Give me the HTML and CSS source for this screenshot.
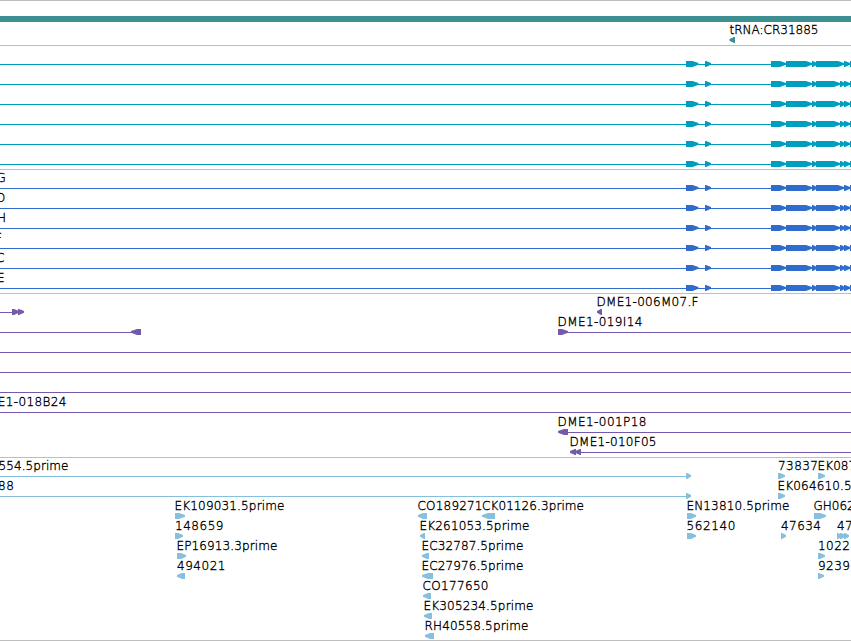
FILE: index.html
```html
<!DOCTYPE html>
<html lang="en">
<head>
<meta charset="utf-8">
<title>Genome tracks</title>
<link rel="stylesheet" href="styles.css">
</head>
<body>
<main class="browser">
  <section class="track gene"><div class="span"></div><svg id="gene" width="851" height="23"></svg></section>
  <section class="track transcript"><svg id="transcript" width="851" height="123"></svg></section>
  <section class="track cds"><svg id="cds" width="851" height="123"></svg></section>
  <section class="track bac"><svg id="bac" width="851" height="163"></svg></section>
  <section class="track est"><svg id="est" width="851" height="182"></svg></section>
</main>
<script src="tracks.js"></script>
</body>
</html>
```
FILE: styles.css
```css
body {
  margin: 0;
  background: #fff;
  overflow: hidden;
}
.browser {
  display: flex;
  flex-direction: column;
  width: 851px;
  height: 641px;
  box-sizing: border-box;
  border-bottom: 1px solid #bebebe;
}
.track {
  border-top: 1px solid #bebebe;
  color: #009ebe;
}
.track svg {
  display: block;
  overflow: hidden;
}
.gene { height: 44px; color: #3d8f94; }
.transcript { height: 123px; }
.cds { height: 123px; color: #306ccd; }
.bac { height: 163px; color: #7559aa; }
.est { height: 182px; color: #87bfdf; }
.span {
  height: 6px;
  margin-top: 15px;
  background: currentColor;
}
.label {
  font: 200 12px "DejaVu Sans Light", "DejaVu Sans", sans-serif;
  fill: #000;
  stroke: #000;
  stroke-width: 0.35px;
}
.shape { fill: currentColor; }
```
FILE: tracks.js
```javascript
const NS = "http://www.w3.org/2000/svg";

function add(id, name, attrs, text) {
  const el = document.createElementNS(NS, name);
  for (const key in attrs) el.setAttribute(key, attrs[key]);
  if (text) el.textContent = text;
  document.getElementById(id).appendChild(el);
}

// Thin connector between exons.
function line(id, y, from, to) {
  add(id, "rect", { class: "shape", x: from, y, width: to - from, height: 1 });
}

// Directional feature, six pixels tall, with a slightly blunt tip.
function feature(id, y, from, to, dir) {
  const top = y - 3, bottom = y + 3;
  const head = Math.min(to - from, to - from > 9 ? 7 : 6);
  const sign = dir === "L" ? -1 : 1;
  const tip = dir === "L" ? from : to;
  const tail = dir === "L" ? to : from;
  const neck = tip - sign * head;
  const d = `M${tail} ${top}H${neck + sign}L${tip} ${y - 1}V${y + 0.8}L${neck + sign} ${bottom}H${tail}Z`;
  add(id, "path", { class: "shape", d });
}

// Label placed by its first glyph and total run length.
function label(id, y, x, length, text) {
  const attrs = { class: "label", x, y: y - 6 };
  if (length) attrs.textLength = length;
  add(id, "text", attrs, text);
}

label("gene", 18, 729.5, 89, "tRNA:CR31885");
feature("gene", 18, 729.5, 735, "L");

for (const id of ["transcript", "cds"]) {
  for (let i = 0; i < 6; i++) {
    const y = 18 + i * 20;
    line(id, y, 0, 851);
    const exons = [[686, 698.5], [705, 711], [771, 786], [786, 812], [812, 817]];
    if (i === 0) exons.push([816, 844]);
    else exons.push([816, 840], [840, 845]);
    exons.push([844, 850], [850, 856]);
    exons.forEach(([a, b]) => feature(id, y, a, b, "R"));
  }
}
[["G", -3.5], ["D", -4], ["H", -3], ["F", -5], ["C", -4], ["E", -3]]
  .forEach(([t, x], i) => label("cds", 18 + i * 20, x, 0, t));

[[18, 0, 18], [38, 0, 133], [38, 560, 851], [58, 0, 851], [78, 0, 851],
 [98, 0, 851], [118, 0, 851], [138, 560, 851], [158, 573, 851]]
  .forEach(([y, a, b]) => line("bac", y, a, b));
[[18, 12, 19, "R"], [18, 18, 24, "R"], [18, 597, 602, "L"],
 [38, 131, 141, "L"], [38, 558, 568, "R"], [138, 558, 568, "L"],
 [158, 570, 576, "L"], [158, 575, 581, "L"]]
  .forEach(f => feature("bac", ...f));
[[18, 596.5, 102, "DME1-006M07.F"], [38, 557.5, 85, "DME1-019I14"],
 [118, -22.5, 89, "DME1-018B24"], [138, 557.5, 89, "DME1-001P18"],
 [158, 569.5, 87, "DME1-010F05"]]
  .forEach(l => label("bac", ...l));

line("est", 18, 0, 688);
line("est", 38, 0, 688);
[[18, 686, 691, "R"], [18, 778, 785, "R"], [18, 818, 825, "R"],
 [38, 686, 691, "R"], [38, 778, 785, "R"],
 [58, 175, 185, "R"], [58, 418, 427, "L"], [58, 482, 495, "L"], [58, 687, 696, "R"],
 [58, 814, 826, "R"],
 [78, 175, 183, "R"], [78, 420, 425, "L"], [78, 687, 696, "R"], [78, 781, 786, "R"],
 [78, 837, 842, "R"], [78, 840, 846, "R"], [78, 844, 849, "R"],
 [98, 177, 186, "R"], [98, 422, 429, "L"], [98, 818, 825, "R"],
 [118, 177, 185, "L"], [118, 422, 433, "L"], [118, 818, 824, "R"],
 [138, 423, 431, "L"], [158, 424, 432, "L"], [178, 425, 434, "L"]]
  .forEach(f => feature("est", ...f));
[[18, -1.5, 70, "554.5prime"], [18, 778, 40, "73837"], [18, 817.5, 109, "EK087214.5prime"],
 [38, -2, 16, "88"], [38, 777.5, 110, "EK064610.5prime"],
 [58, 174.5, 110, "EK109031.5prime"], [58, 417.5, 65, "CO189271"],
 [58, 482, 102, "CK01126.3prime"], [58, 686.5, 103, "EN13810.5prime"],
 [58, 813.5, 103, "GH06243.5prime"],
 [78, 175, 48.5, "148659"], [78, 419.5, 110, "EK261053.5prime"],
 [78, 686.5, 49, "562140"], [78, 781, 40, "47634"], [78, 837, 40, "47634"],
 [98, 176.5, 101, "EP16913.3prime"], [98, 421.5, 102, "EC32787.5prime"],
 [98, 818, 32, "1022"],
 [118, 177, 48.5, "494021"], [118, 421.5, 102, "EC27976.5prime"], [118, 818, 32, "9239"],
 [138, 422.5, 66, "CO177650"], [158, 423.5, 110, "EK305234.5prime"],
 [178, 424.5, 104, "RH40558.5prime"]]
  .forEach(l => label("est", ...l));
```
